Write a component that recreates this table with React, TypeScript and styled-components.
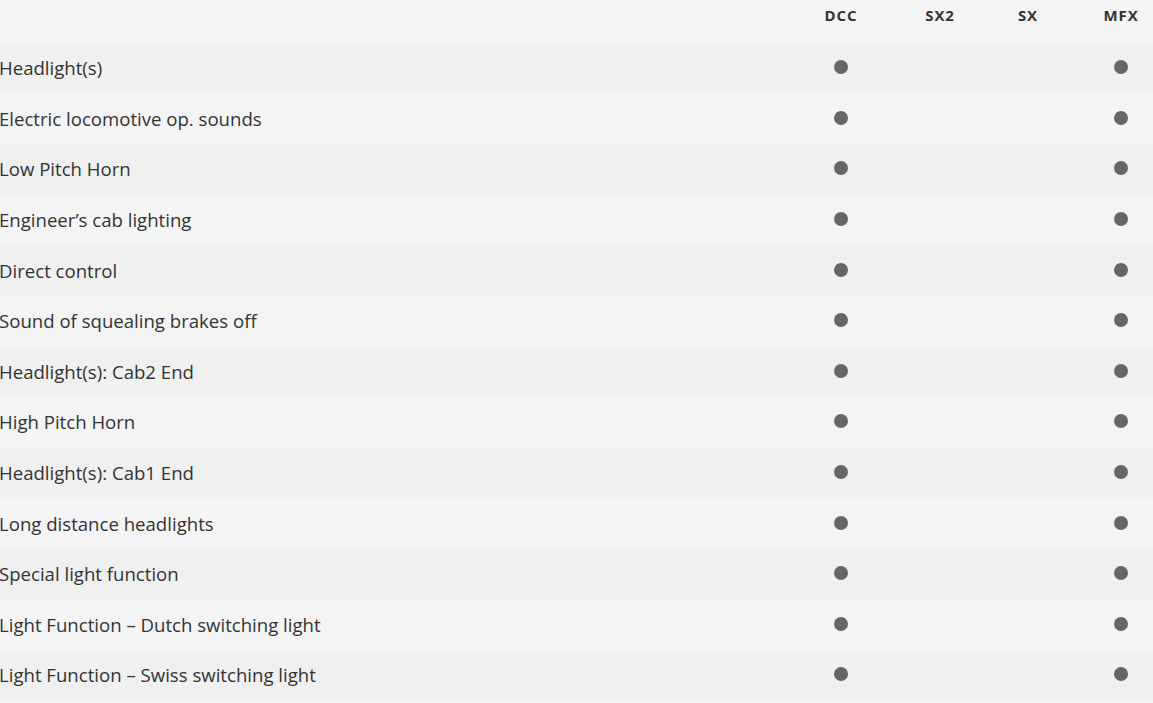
import React, { FC } from "react";
import styled, { createGlobalStyle } from "styled-components";

const columns = ["DCC", "SX2", "SX", "MFX"];
// widths of the protocol columns, so the labels sit over the dots
const colWidths = "144px 54px 122px 64px";

type Feature = {
  name: string;
  support: boolean[];
};

const features: Feature[] = [
  { name: "Headlight(s)", support: [true, false, false, true] },
  { name: "Electric locomotive op. sounds", support: [true, false, false, true] },
  { name: "Low Pitch Horn", support: [true, false, false, true] },
  { name: "Engineer’s cab lighting", support: [true, false, false, true] },
  { name: "Direct control", support: [true, false, false, true] },
  { name: "Sound of squealing brakes off", support: [true, false, false, true] },
  { name: "Headlight(s): Cab2 End", support: [true, false, false, true] },
  { name: "High Pitch Horn", support: [true, false, false, true] },
  { name: "Headlight(s): Cab1 End", support: [true, false, false, true] },
  { name: "Long distance headlights", support: [true, false, false, true] },
  { name: "Special light function", support: [true, false, false, true] },
  { name: "Light Function – Dutch switching light", support: [true, false, false, true] },
  { name: "Light Function – Swiss switching light", support: [true, false, false, true] },
];

const GlobalStyle = createGlobalStyle`
  html, body {
    margin: 0;
    padding: 0;
    background: #f4f4f4;
    font-family: "Open Sans", "Noto Sans", sans-serif;
    color: #333;
  }
`;

const App: FC = () => {
  return (
    <>
      <GlobalStyle />
      <Table>
        <HeaderRow>
          <div />
          {columns.map((c) => (
            <HeadCell key={c}>{c}</HeadCell>
          ))}
        </HeaderRow>
        {features.map((f, i) => (
          <Row key={f.name} $odd={i % 2 == 0}>
            <Name>{f.name}</Name>
            {f.support.map((s, j) => (
              <Cell key={j}>{s ? <Dot /> : null}</Cell>
            ))}
          </Row>
        ))}
      </Table>
    </>
  );
};

const Table = styled.div`
  display: flex;
  flex-direction: column;
  width: 1153px;
`;

const HeaderRow = styled.div`
  display: grid;
  grid-template-columns: 1fr ${colWidths};
  height: 43px;
  align-items: center;
  background: #f4f4f4;
`;

const HeadCell = styled.div`
  text-align: center;
  font-weight: 700;
  font-size: 15px;
  letter-spacing: 0.9px;
  color: #333;
  margin-top: -13px;
`;

const Row = styled.div<{ $odd: boolean }>`
  display: grid;
  grid-template-columns: 1fr ${colWidths};
  height: 50.6px;
  align-items: center;
  background: ${(p) => (p.$odd ? "#f0f0f0" : "#f4f4f4")};
`;

const Name = styled.div`
  font-size: 18.6px;
  color: #333;
  white-space: nowrap;
  margin-left: -1px;
  margin-top: -1px;
`;

const Cell = styled.div`
  display: flex;
  justify-content: center;
  align-items: center;
  margin-top: -2px;
`;

const Dot = styled.span`
  width: 14px;
  height: 14px;
  border-radius: 50%;
  background: #666;
`;

export default App;
